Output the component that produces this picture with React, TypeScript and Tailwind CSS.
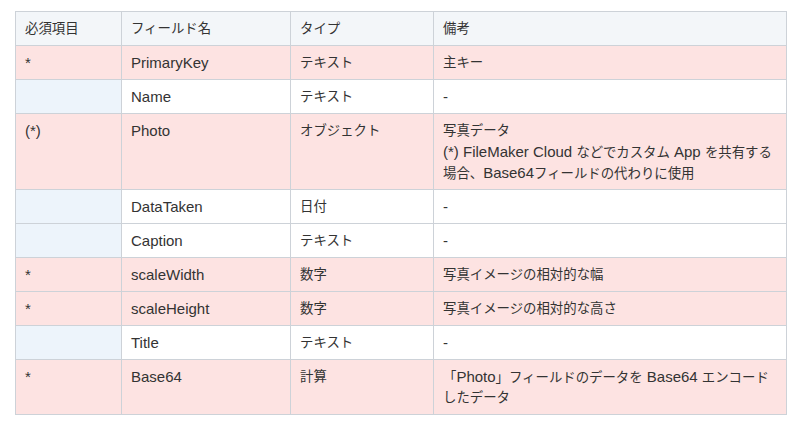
const rows: { req: string; name: string; type: string; note: string[]; pink: boolean }[] = [
  { req: "*", name: "PrimaryKey", type: "テキスト", note: ["主キー"], pink: true },
  { req: "", name: "Name", type: "テキスト", note: ["-"], pink: false },
  {
    req: "(*)",
    name: "Photo",
    type: "オブジェクト",
    note: ["写真データ", "(*) FileMaker Cloud などでカスタム App を共有する", "場合、Base64フィールドの代わりに使用"],
    pink: true,
  },
  { req: "", name: "DataTaken", type: "日付", note: ["-"], pink: false },
  { req: "", name: "Caption", type: "テキスト", note: ["-"], pink: false },
  { req: "*", name: "scaleWidth", type: "数字", note: ["写真イメージの相対的な幅"], pink: true },
  { req: "*", name: "scaleHeight", type: "数字", note: ["写真イメージの相対的な高さ"], pink: true },
  { req: "", name: "Title", type: "テキスト", note: ["-"], pink: false },
  { req: "*", name: "Base64", type: "計算", note: ["「Photo」フィールドのデータを Base64 エンコード", "したデータ"], pink: true },
];

// latin runs render a touch larger than the kana, like the original font mix
function Line({ text }: { text: string }) {
  const parts = text.match(/[\x20-\x7e]+|[^\x20-\x7e]+/g) ?? [];
  return (
    <div className="h-[21px] overflow-visible whitespace-nowrap">
      {parts.map((p, i) =>
        /^[\x20-\x7e]+$/.test(p) ? (
          <span key={i} className="text-[15px]">
            {p}
          </span>
        ) : (
          <span key={i}>{p}</span>
        )
      )}
    </div>
  );
}

const cell = "border border-[#cdd2d8] px-[9px] py-[6px] align-top";

export default function App() {
  return (
    <div
      className="w-[800px] h-[429px] bg-white pt-[11px] pl-[15px] text-[13.4px] leading-[21px] text-[#333]"
      style={{ fontFamily: '"Liberation Sans", "Noto Sans CJK JP", sans-serif' }}
    >
      <table className="w-[772px] border-collapse border border-[#cdd2d8] table-fixed">
        <colgroup>
          <col className="w-[106px]" />
          <col className="w-[169px]" />
          <col className="w-[143px]" />
          <col />
        </colgroup>
        <thead>
          <tr className="bg-[#f3f6f9]">
            <th className={cell + " text-left font-normal"}><Line text="必須項目" /></th>
            <th className={cell + " text-left font-normal"}><Line text="フィールド名" /></th>
            <th className={cell + " text-left font-normal"}><Line text="タイプ" /></th>
            <th className={cell + " text-left font-normal"}><Line text="備考" /></th>
          </tr>
        </thead>
        <tbody>
          {rows.map((r) => (
            <tr key={r.name} className={r.pink ? "bg-[#fde3e2]" : "bg-white"}>
              <td className={cell + (r.pink ? "" : " bg-[#edf4fb]")}>
                <Line text={r.req} />
              </td>
              <td className={cell}>
                <Line text={r.name} />
              </td>
              <td className={cell}>
                <Line text={r.type} />
              </td>
              <td className={cell}>
                {r.note.map((n, i) => (
                  <Line key={i} text={n} />
                ))}
              </td>
            </tr>
          ))}
        </tbody>
      </table>
    </div>
  );
}
